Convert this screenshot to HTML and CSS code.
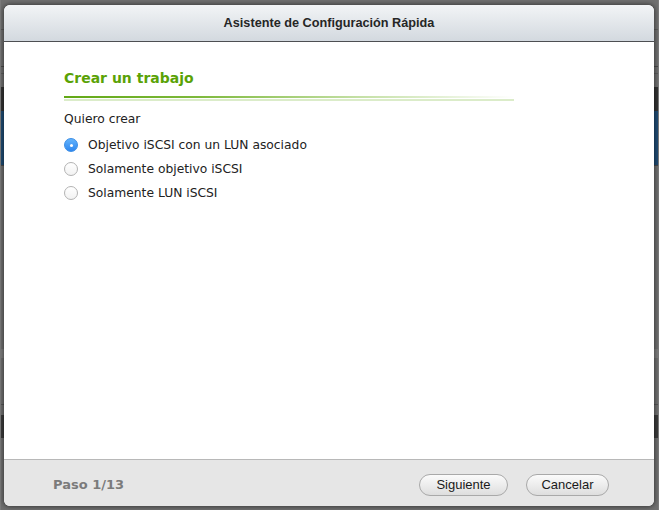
FILE: index.html
```html
<!DOCTYPE html>
<html lang="es">
<head>
<meta charset="utf-8">
<title>Asistente de Configuración Rápida</title>
<link rel="stylesheet" href="styles.css">
</head>
<body>
<div class="desktop">
  <div class="bg bg-line1"></div>
  <div class="bg bg-line2"></div>
  <div class="bg bg-line3"></div>
  <div class="bg bg-dark1"></div>
  <div class="bg bg-blue"></div>
  <div class="bg bg-line4"></div>
  <div class="bg bg-mid"></div>
  <div class="bg bg-line5"></div>
  <div class="bg bg-dark2"></div>
  <div class="bg bg-left1"></div>
  <div class="bg bg-left2"></div>

  <div class="dialog">
    <div class="dlg-header">Asistente de Configuración Rápida</div>
    <div class="dlg-body">
      <h2 class="section-title">Crear un trabajo</h2>
      <div class="rule"></div>
      <div class="prompt">Quiero crear</div>
      <div class="options">
        <label class="option"><span class="radio checked"></span>Objetivo iSCSI con un LUN asociado</label>
        <label class="option"><span class="radio"></span>Solamente objetivo iSCSI</label>
        <label class="option"><span class="radio"></span>Solamente LUN iSCSI</label>
      </div>
    </div>
    <div class="dlg-footer">
      <span class="step">Paso 1/13</span>
      <div class="buttons">
        <button class="btn btn-next">Siguiente</button>
        <button class="btn btn-cancel">Cancelar</button>
      </div>
    </div>
  </div>
</div>
</body>
</html>
```

FILE: styles.css
```css
html, body {
  margin: 0;
  padding: 0;
}

body {
  width: 659px;
  height: 510px;
  overflow: hidden;
  background: #6f6f6f;
  font-family: "DejaVu Sans", Verdana, sans-serif;
}

.desktop {
  position: relative;
  width: 659px;
  height: 510px;
  padding: 5px 0 0 4px;
  box-sizing: border-box;
}

.bg {
  position: absolute;
}
.bg-line1 { left: 0; right: 0; top: 29px; height: 1px; background: #5a5a5a; }
.bg-line2 { left: 0; right: 0; top: 66px; height: 1px; background: #4a4a4a; }
.bg-line3 { left: 0; right: 0; top: 73px; height: 1px; background: #5c5c5c; }
.bg-dark1 { left: 0; right: 0; top: 87px; height: 24px; background: #333333; }
.bg-blue { left: 0; right: 0; top: 111px; height: 54px; background: #1f4b73; }
.bg-line4 { left: 0; right: 0; top: 165px; height: 1px; background: #4a4a4a; }
.bg-mid { left: 0; right: 0; top: 349px; height: 9px; background: #7d7d7d; }
.bg-line5 { left: 0; right: 0; top: 404px; height: 1px; background: #555555; }
.bg-dark2 { left: 0; right: 0; top: 415px; height: 23px; background: #3b3b3b; }
.bg-left1 { left: 0; top: 0; bottom: 0; width: 1px; background: #7a7a7a; }
.bg-left2 { right: 0; top: 0; bottom: 0; width: 1px; background: #7a7a7a; }

.dialog {
  position: relative;
  width: 650px;
  height: 501px;
  border-radius: 6px;
  overflow: hidden;
  background: #ffffff;
  display: flex;
  flex-direction: column;
  box-shadow: 0 0 4px 1px rgba(0, 0, 0, 0.45);
}

.dlg-header {
  height: 36px;
  flex: none;
  border-bottom: 1px solid #4d4f52;
  background: linear-gradient(#f2f4f6, #d3d9df);
  display: flex;
  align-items: center;
  justify-content: center;
  font-family: "Liberation Sans", Arial, sans-serif;
  font-weight: bold;
  font-size: 12.7px;
  color: #262626;
}

.dlg-body {
  flex: 1;
  padding: 28px 0 0 60px;
}

.section-title {
  margin: 0;
  font-size: 14px;
  line-height: 16px;
  font-weight: bold;
  color: #5aa206;
}

.rule {
  margin-top: 10px;
  width: 450px;
  height: 2px;
  background: linear-gradient(to right, #62a815 0%, #7eb93c 30%, rgba(170, 210, 125, 0.7) 65%, rgba(255, 255, 255, 0) 100%);
  border-bottom: 1px solid #ffffff;
  box-shadow: 0 2px 0 0 rgba(175, 212, 135, 0.45);
}

.prompt {
  margin-top: 12px;
  font-size: 12.3px;
  line-height: 16px;
  color: #222222;
}

.options {
  margin-top: 6px;
  display: flex;
  flex-direction: column;
}

.option {
  height: 24px;
  display: flex;
  align-items: center;
  font-size: 12.3px;
  color: #222222;
}

.radio {
  width: 14px;
  height: 14px;
  box-sizing: border-box;
  border-radius: 50%;
  border: 1px solid #b3b3b3;
  background: linear-gradient(#ffffff, #f2f2f2);
  margin-right: 10px;
  flex: none;
  position: relative;
}

.radio.checked {
  border-color: #3a8ee6;
  background: linear-gradient(#63b3fc, #2f87ef);
}

.radio.checked::after {
  content: "";
  position: absolute;
  left: 4.5px;
  top: 4.5px;
  width: 3px;
  height: 3px;
  border-radius: 50%;
  background: #ffffff;
}

.dlg-footer {
  height: 47px;
  flex: none;
  border-top: 1px solid #b8b8b8;
  background: #e6e6e6;
  display: flex;
  align-items: center;
  justify-content: space-between;
  padding: 3px 45px 0 49px;
  box-sizing: border-box;
}

.step {
  font-size: 13px;
  font-weight: bold;
  color: #7b7b7b;
}

.buttons {
  display: flex;
  gap: 18px;
}

.btn {
  height: 22px;
  border: 1px solid #a9a9a9;
  border-radius: 11px;
  background: linear-gradient(#fbfbfb, #dedede);
  font-family: "Liberation Sans", Arial, sans-serif;
  font-size: 13px;
  color: #1a1a1a;
  padding: 0;
}

.btn-next { width: 89px; }
.btn-cancel { width: 83px; }
```
